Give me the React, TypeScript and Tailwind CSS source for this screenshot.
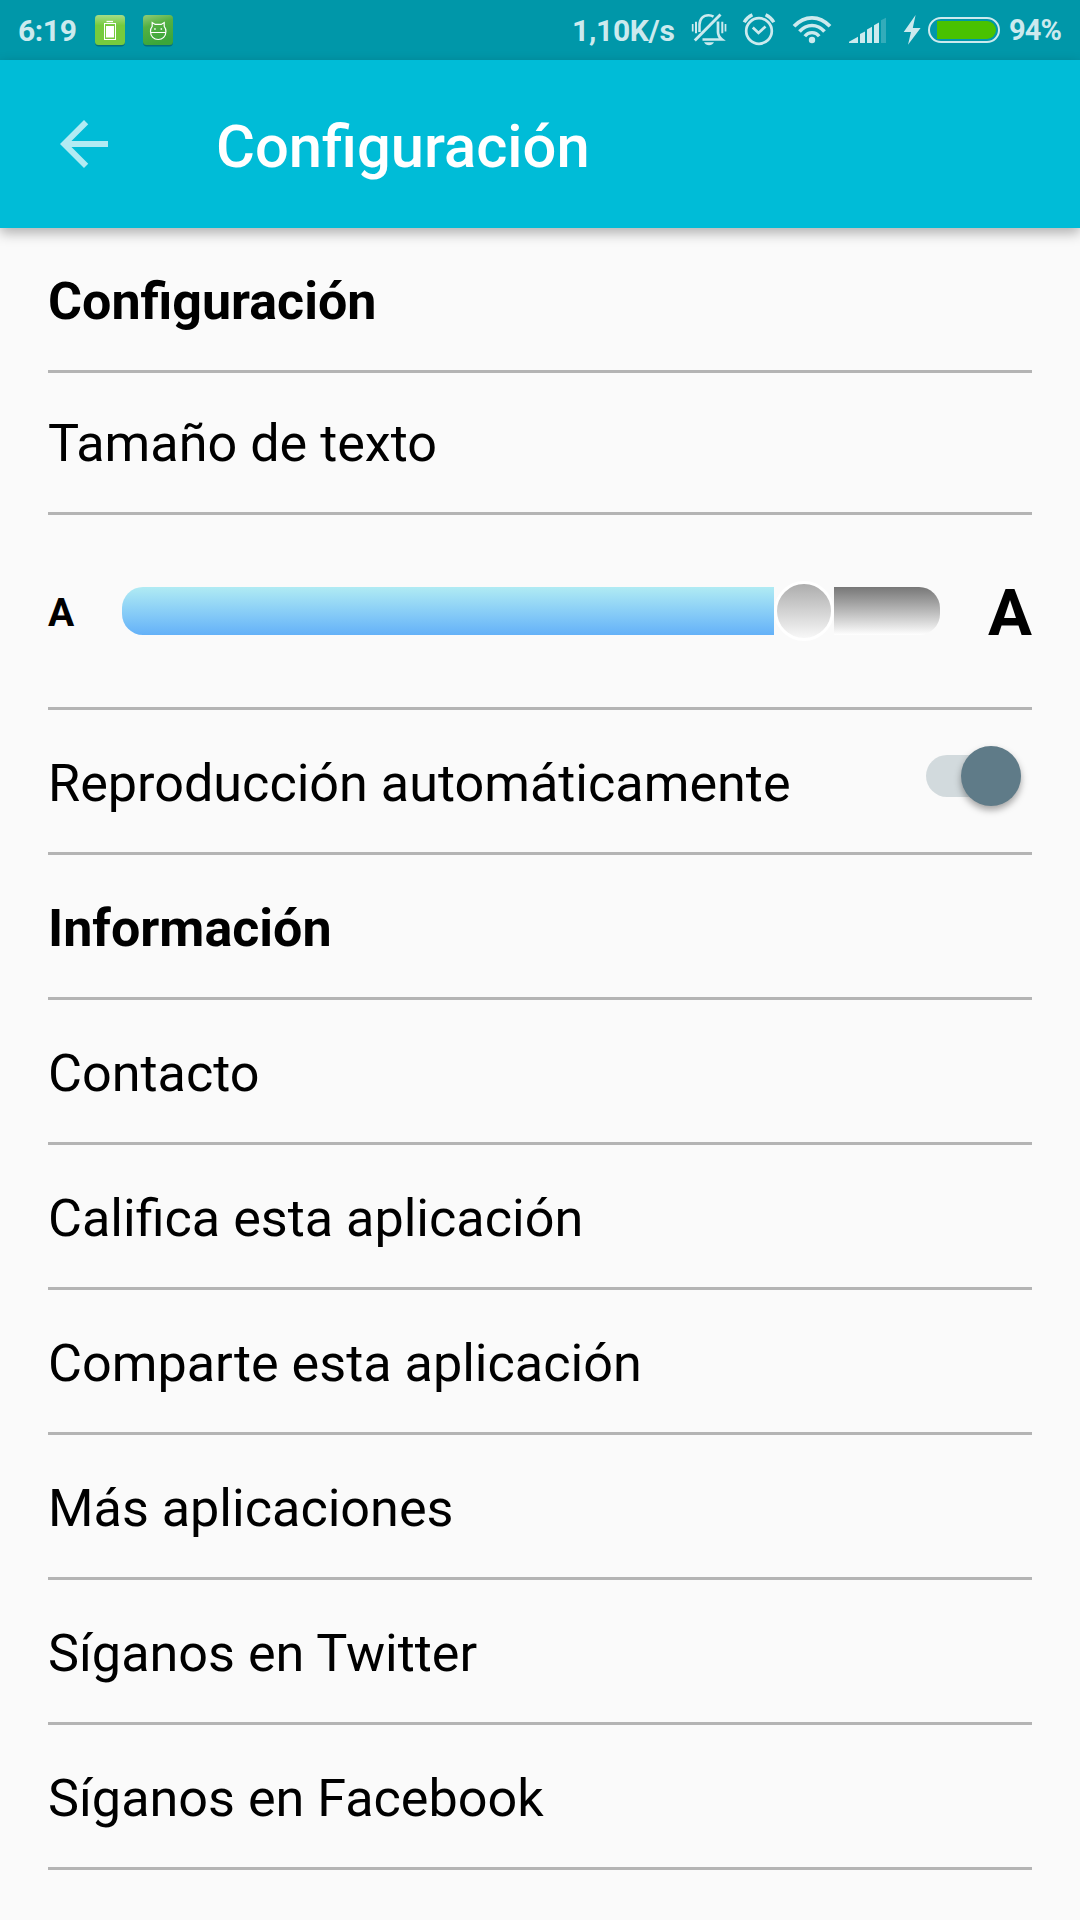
import { useState } from "react";
import type { ReactNode } from "react";

const links = [
  "Contacto",
  "Califica esta aplicación",
  "Comparte esta aplicación",
  "Más aplicaciones",
  "Síganos en Twitter",
  "Síganos en Facebook",
];

function StatusBar() {
  return (
    <div className="flex h-[60px] justify-between bg-[#0097a9] text-[30px] leading-[61px] font-bold text-[#cceaee]">
      <div className="flex">
        <span className="w-[90px] pl-[18px] tracking-[-0.4px]">6:19</span>
        <svg className="h-[60px] w-[90px]" viewBox="90 0 90 60">
          <defs>
            <linearGradient id="appA" x1="0" y1="0" x2="0" y2="1">
              <stop offset="0" stopColor="#a5dc88" />
              <stop offset="0.35" stopColor="#76cb3d" />
              <stop offset="1" stopColor="#76cb3d" />
            </linearGradient>
            <linearGradient id="appB" x1="0" y1="0" x2="0.3" y2="1">
              <stop offset="0" stopColor="#92cc78" />
              <stop offset="0.4" stopColor="#54b043" />
              <stop offset="1" stopColor="#3ba63b" />
            </linearGradient>
          </defs>
          <rect x="95" y="16.5" width="30" height="30" rx="4" fill="#04707c" />
          <rect x="95" y="15" width="30" height="30" rx="3.5" fill="url(#appA)" />
          <path d="M106.500 21.500h6.500" stroke="#fff" strokeWidth="1.300" />
          <rect x="104.500" y="23.500" width="11" height="16" fill="none" stroke="#fff" strokeWidth="1" />
          <rect x="106" y="26" width="8" height="11.500" fill="#fff" />
          <rect x="143" y="16.500" width="30" height="30" rx="4" fill="#04707c" />
          <rect x="143" y="15" width="30" height="30" rx="3.500" fill="url(#appB)" />
          <path
            d="M150.500 31.500c0-2.500.7-4 1.700-5.200v-3.800l3 1.900h6l3-1.900v3.800c1 1.200 1.700 2.700 1.700 5.200 0 5-3.400 8-7.700 8s-7.700-3-7.700-8z M150.500 32.500h15.500"
            fill="none"
            stroke="#fff"
            strokeWidth="1.200"
          />
          <path d="M154.200 29h1.500M160.600 29h1.500" stroke="#fff" strokeWidth="1.500" />
        </svg>
      </div>

      <div className="flex">
        <span className="w-[116px] tracking-[-0.3px]">1,10K/s</span>

        {/* Vibrate / muted bell */}
        <svg className="h-[60px] w-[48px]" viewBox="688 0 48 60" fill="none" stroke="#cceaee">
          <path d="M699.500 32V25c0-6 3.500-9.800 9-9.800 2 0 3.600.5 5 1.400" strokeWidth="2.500" />
          <path d="M718 21.500V32c0 3.600 1.400 5.400 4 7.500H702.500" strokeWidth="2.700" />
          <path d="M694.800 40.500 720.500 14.600" strokeWidth="2.900" />
          <path d="M704 42.300h10c-1 2-2.800 3-5 3s-4-1-5-3z" fill="#cceaee" stroke="none" />
          <path d="M692.700 24v7.500M725.500 24v7.500" strokeWidth="1.700" />
          <path d="M696 21.800v11.400M722.300 21.800v11.400" strokeWidth="2" />
        </svg>

        {/* Alarm */}
        <svg className="h-[60px] w-[52px]" viewBox="736 0 52 60" fill="none" stroke="#cceaee">
          <circle cx="759" cy="31" r="12.800" strokeWidth="2.700" />
          <path d="M752.800 27.500 758.500 33 765.500 26.500" strokeWidth="2.700" />
          <path d="M744.200 22.200q2.600-4.700 8.200-7.400M773.800 22.200q-2.600-4.700-8.200-7.400" strokeWidth="3.300" />
        </svg>

        {/* Wifi */}
        <svg className="h-[60px] w-[54px]" viewBox="788 0 54 60" fill="none" stroke="#cceaee">
          <path d="M794 26.300Q802 17.800 812 17.800T830 26.300" strokeWidth="3.800" />
          <path d="M799.500 31.500Q805 25.500 812 25.500T824.500 31.500" strokeWidth="3.700" />
          <path d="M804.800 36.300Q807.500 32.700 812 32.700T819.200 36.300" strokeWidth="3.300" />
          <circle cx="812" cy="40" r="3.200" fill="#cceaee" stroke="none" />
        </svg>

        {/* Signal strength */}
        <svg className="h-[60px] w-[54px]" viewBox="842 0 54 60" fill="#cceaee">
          <path d="M849 43v-1.300l9-4.900V43z" />
          <path d="M860 43V34l5-2.500V43z" />
          <path d="M867 43V29.500l5-2.700V43z" />
          <path d="M874 43V25.200l5-2.700V43z" />
          <path d="M881 43V20.300l5-2.600V43z" fill="#33acba" />
        </svg>

        {/* Charging battery */}
        <svg className="h-[60px] w-[113px]" viewBox="896 0 113 60">
          <path d="M915.600 15 903.700 32h7.300l-3 12.800L920.600 28h-7.800z" fill="#cceaee" />
          <rect x="929" y="18" width="70" height="24" rx="12" fill="none" stroke="#cceaee" strokeWidth="2" />
          <path d="M937 21h50a9 9 0 0 1 0 18h-50z" fill="#49c200" />
        </svg>
        <span className="w-[71px] text-[29px] tracking-[-0.9px]">94%</span>
      </div>
    </div>
  );
}

function Row({ children, bold = false }: { children: ReactNode; bold?: boolean }) {
  return (
    <div
      className={`flex h-[145px] items-end justify-between border-b-3 border-[#b4b4b4] pb-[38px] ${
        bold ? "text-[52px] font-bold" : "text-[52.15px] font-normal"
      }`}
    >
      {children}
    </div>
  );
}

export default function App() {
  const [autoplay, setAutoplay] = useState(true);

  return (
    <div className="h-[1920px] w-[1080px] overflow-hidden bg-[#fafafa] font-['Roboto',sans-serif] text-black">
      <StatusBar />

      {/* Toolbar */}
      <header className="flex h-[168px] items-center bg-[#00bcd7] shadow-[0_5px_12px_rgba(0,0,0,0.3)]">
        <button aria-label="Atrás" className="ml-12">
          <svg className="size-[72px]" viewBox="0 0 24 24" fill="#b2ebf3">
            <path d="M20 11H7.830l5.590-5.590L12 4l-8 8 8 8 1.410-1.410L7.830 13H20v-2z" />
          </svg>
        </button>
        <h1 className="ml-24 pt-[5px] text-[59.7px] leading-[70px] font-medium text-white">Configuración</h1>
      </header>

      <main className="px-12 leading-[60px]">
        <Row bold>Configuración</Row>
        <div className="flex h-[142px] items-end border-b-3 border-[#b4b4b4] pb-[38px] text-[52.15px]">
          Tamaño de texto
        </div>

        {/* Text size slider */}
        <div className="flex h-[195px] items-center justify-between border-b-3 border-[#b4b4b4] font-bold">
          <span className="w-[74px] pt-[3px] text-[39px]">A</span>
          <div className="flex items-center">
            <div className="h-12 w-[652px] rounded-l-[21px] bg-linear-to-b from-[#b0ebf3] to-[#64b1f8]" />
            <div className="size-[60px] rounded-full border-3 border-white bg-linear-to-b from-[#adadad] to-[#f8f8f8]" />
            <div className="h-12 w-[106px] rounded-r-[21px] bg-linear-to-b from-[#777] to-white" />
          </div>
          <span className="w-[92px] pt-[4px] text-right text-[65.5px]">A</span>
        </div>

        <Row>
          <span>Reproducción automáticamente</span>
          <button
            role="switch"
            aria-checked={autoplay}
            aria-label="Reproducción automáticamente"
            onClick={() => setAutoplay(!autoplay)}
            className={`mr-[11px] mb-[17px] flex h-[42px] w-[95px] items-center rounded-full bg-[#d2dadd] ${
              autoplay ? "justify-end" : "justify-start"
            }`}
          >
            <span className="size-[60px] shrink-0 rounded-full bg-[#5f7b88] shadow-[0_4px_7px_rgba(0,0,0,0.35)]" />
          </button>
        </Row>

        <Row bold>Información</Row>
        {links.map((label) => (
          <Row key={label}>{label}</Row>
        ))}
      </main>
    </div>
  );
}
